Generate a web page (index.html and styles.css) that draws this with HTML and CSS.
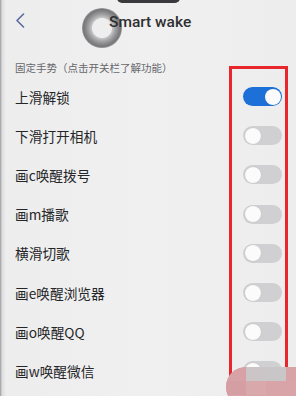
FILE: index.html
```html
<!DOCTYPE html>
<html lang="zh">
<head>
<meta charset="utf-8">
<link rel="stylesheet" href="styles.css">
</head>
<body>
<div class="screen">
  <div class="notch"></div>
  <div class="ring"></div>
  <header class="topbar">
    <svg class="back" width="10" height="15" viewBox="0 0 10 15"><path d="M8.5 1 L2 7.5 L8.5 14" fill="none" stroke="#5a6a9c" stroke-width="1.6" stroke-linecap="round" stroke-linejoin="round"/></svg>
    <h1 class="title">Smart wake</h1>
  </header>
  <div class="label">固定手势（点击开关栏了解功能）</div>
  <ul class="list">
    <li class="row"><span>上滑解锁</span><i class="sw on"></i></li>
    <li class="row"><span>下滑打开相机</span><i class="sw"></i></li>
    <li class="row"><span>画c唤醒拨号</span><i class="sw"></i></li>
    <li class="row"><span>画m播歌</span><i class="sw"></i></li>
    <li class="row"><span>横滑切歌</span><i class="sw"></i></li>
    <li class="row"><span>画e唤醒浏览器</span><i class="sw"></i></li>
    <li class="row"><span>画o唤醒QQ</span><i class="sw"></i></li>
    <li class="row"><span>画w唤醒微信</span><i class="sw"></i></li>
  </ul>
  <div class="note">注：画字母手势需在黑屏状态下进行，部分手势可能</div>
  <div class="mark"></div>
  <div class="blob"><b></b><b></b><b></b><b></b><b></b><b></b></div>
</div>
</body>
</html>
```

FILE: styles.css
```css
html, body {
  margin: 0;
  padding: 0;
}
body {
  width: 296px;
  height: 396px;
  overflow: hidden;
  background: #efeff0;
  font-family: "Noto Sans CJK SC", "Noto Sans", sans-serif;
}
.screen {
  position: relative;
  width: 296px;
  height: 396px;
  overflow: hidden;
  background: linear-gradient(90deg, #9a9a9c 0, #dcdcde 2px, #ededee 6px, #f0f0f1 50%, #ededee 100%);
}
.notch {
  position: absolute;
  left: 117px;
  top: -4px;
  width: 63px;
  height: 7px;
  background: #3a3a3c;
  border-radius: 0 0 5px 5px;
}
.topbar {
  position: relative;
  z-index: 1;
  height: 58px;
  display: flex;
  align-items: flex-start;
  padding: 13px 0 0 15px;
  box-sizing: border-box;
}
.back {
  display: block;
}
.title {
  margin: -0.5px 0 0 84px;
  font-family: Roboto, "Liberation Sans", Arial, sans-serif;
  font-size: 15.5px;
  font-weight: 500;
  color: #2f2f31;
  line-height: 18px;
}
.ring {
  position: absolute;
  left: 82px;
  top: 8px;
  width: 40px;
  height: 40px;
  border-radius: 50%;
  background: radial-gradient(circle at 50% 50%, #eeeeef 0, #eeeeef 9.5px, #c4c4c6 10.5px, #a6a6a8 13px, #8a8a8c 16px, #767678 18.5px, #9c9c9e 20px);
}
.label {
  height: 19px;
  padding-left: 15px;
  font-size: 10.5px;
  line-height: 19px;
  color: #67676a;
}
.list {
  list-style: none;
  margin: 0;
  padding: 0;
}
.row {
  height: 39.2px;
  display: flex;
  align-items: center;
  justify-content: space-between;
  padding: 0 14px 0 15px;
  font-size: 13.7px;
  color: #262628;
}
.sw {
  position: relative;
  width: 39px;
  height: 19px;
  border-radius: 10px;
  background: #d0d0d2;
  display: block;
}
.sw::after {
  content: "";
  position: absolute;
  top: 1.5px;
  left: 1.5px;
  width: 16px;
  height: 16px;
  border-radius: 50%;
  background: #fbfbfb;
  box-shadow: 0 0 1px rgba(0,0,0,0.15);
}
.sw.on {
  background: #1d70d8;
}
.sw.on::after {
  left: 21.5px;
}
.note {
  padding: 5px 0 0 15px;
  font-size: 10px;
  line-height: 12px;
  color: #8a8a8c;
  white-space: nowrap;
}
.mark {
  position: absolute;
  left: 229px;
  top: 66px;
  width: 53px;
  height: 340px;
  border: 3px solid #e8262c;
  border-bottom: none;
}
.blob {
  position: absolute;
  left: 226px;
  top: 367px;
  width: 80px;
  height: 40px;
  border-radius: 22px 0 0 22px;
  overflow: hidden;
  display: grid;
  grid-template-columns: 20px 20px 20px 20px;
  grid-template-rows: 14px 14px;
  background: #d9a4a8;
}
.blob b:nth-child(1) { background: #d7a1a5; }
.blob b:nth-child(2) { background: #cbc5c7; }
.blob b:nth-child(3) { background: #c9c6c8; }
.blob b:nth-child(4) { background: #d8a3a7; }
.blob b:nth-child(5) { background: #d59ea2; }
.blob b:nth-child(6) { background: #d8a8ab; }
```
